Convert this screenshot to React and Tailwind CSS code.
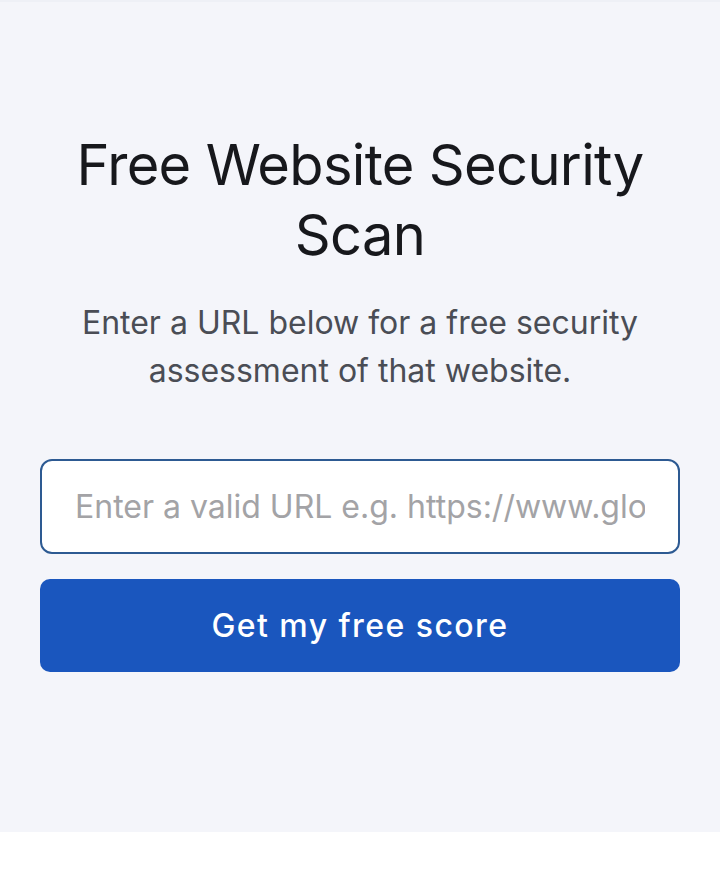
import React, { useState } from 'react';

const App = () => {
    const [url, setUrl] = useState('');

    return (
        <div className="w-full min-h-[876px] bg-white" style={{ fontFamily: 'Inter, "Noto Sans", sans-serif' }}>
            {/* Scan hero */}
            <section className="h-[832px] bg-[#f4f5fa] border-t-2 border-[#eef0f6] px-10 pt-[128px]">
                <h1 className="text-center text-[56px] leading-[70px] font-normal tracking-[-0.012em] text-[#17181c]">
                    Free Website Security Scan
                </h1>
                <p className="mt-[29px] text-center text-[32px] leading-[48px] text-[#4a4d55]">
                    Enter a URL below for a free security assessment of that website.
                </p>
                <form
                    className="mt-[64px] flex flex-col gap-[25px]"
                    onSubmit={(e) => e.preventDefault()}
                >
                    <input
                        type="text"
                        value={url}
                        onChange={(e) => setUrl(e.target.value)}
                        placeholder="Enter a valid URL e.g. https://www.globalsign.com"
                        className="w-full h-[95px] rounded-[12px] border-2 border-[#2d5a92] bg-white px-[33px] text-[32px] text-[#17181c] placeholder:text-[#a3a3a6] outline-none"
                    />
                    <button
                        type="submit"
                        className="w-full h-[93px] rounded-[10px] bg-[#1a56be] text-white text-[32px] font-medium tracking-[0.045em]"
                    >
                        Get my free score
                    </button>
                </form>
            </section>
        </div>
    );
};

export default App;
